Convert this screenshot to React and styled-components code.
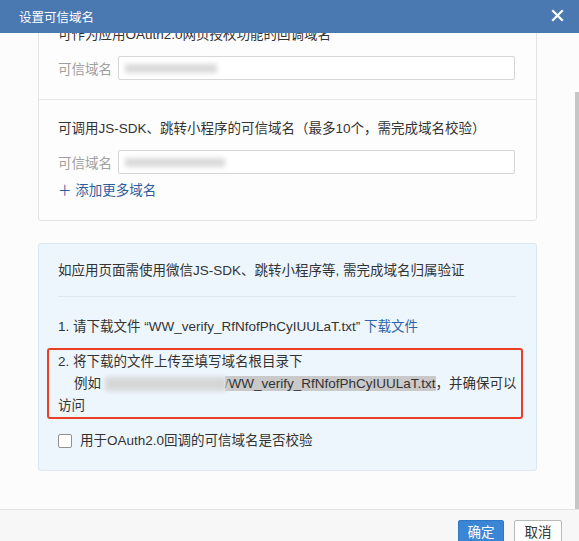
import React, { useEffect, useRef } from 'react';
import styled, { createGlobalStyle } from 'styled-components';

const GlobalStyle = createGlobalStyle`
  *, *::before, *::after {
    box-sizing: border-box;
  }
  html, body {
    margin: 0;
    padding: 0;
    background: #ffffff;
  }
  body {
    font-family: "Liberation Sans", "Noto Sans CJK SC", sans-serif;
    color: #333333;
  }
`;

const Dialog = styled.div`
  width: 579px;
  height: 541px;
  display: flex;
  flex-direction: column;
  overflow: hidden;
  background: #fcfcfc;
`;

const Header = styled.div`
  flex: none;
  height: 33px;
  display: flex;
  align-items: center;
  justify-content: space-between;
  padding: 0 14px 0 19px;
  background: #4a79b2;
  color: #ffffff;
  font-size: 12.5px;
`;

const CloseButton = styled.button`
  display: flex;
  align-items: center;
  justify-content: center;
  width: 16px;
  height: 16px;
  padding: 0;
  margin-top: -2px;
  border: none;
  background: none;
  cursor: pointer;
`;

const BodyWrap = styled.div`
  flex: 1;
  position: relative;
  min-height: 0;
`;

const Body = styled.div`
  height: 100%;
  overflow: hidden;
  padding: 40px 42px 38px 38px;
`;

const ScrollThumb = styled.div`
  position: absolute;
  right: 0;
  top: 59px;
  bottom: 0;
  width: 4px;
  background: #c6c6c6;
`;

const Card = styled.div`
  border: 1px solid #e3e3e3;
  border-radius: 3px;
  background: #fdfdfd;
`;

const Section = styled.div`
  padding: 18px 21px 18px 19px;
  border-top: ${(p) => (p.$first ? 'none' : '1px solid #e6e6e6')};
  padding-bottom: ${(p) => (p.$first ? '19px' : '18px')};
`;

const Text = styled.div`
  font-size: 13.5px;
  line-height: 22px;
  color: #333333;
  white-space: nowrap;
`;

const FieldRow = styled.div`
  display: flex;
  align-items: center;
  margin-top: 10px;
`;

const Label = styled.span`
  width: 60px;
  flex: none;
  font-size: 13.5px;
  color: #a0a0a0;
`;

const Input = styled.div`
  flex: 1;
  height: 24px;
  border: 1px solid #d6d6d6;
  border-radius: 2px;
  background: #ffffff;
  display: flex;
  align-items: center;
  padding-left: 6px;
`;

const Blur = styled.span`
  display: inline-block;
  width: ${(p) => p.$w}px;
  height: ${(p) => p.$h || 12}px;
  background: ${(p) => p.$c || '#d2d2d2'};
  filter: blur(2.5px);
  vertical-align: middle;
`;

const AddLink = styled.a`
  display: block;
  margin-top: 6px;
  font-size: 13.5px;
  line-height: 22px;
  color: #2c5e9e;
  text-decoration: none;
`;

const InfoBox = styled.div`
  margin-top: 22px;
  border: 1px solid #dbe7f2;
  border-radius: 3px;
  background: #eef6fd;
  padding: 16px 20px 18px 19px;
`;

const Divider = styled.div`
  height: 1px;
  background: #dde6ee;
  margin: 14px 0 19px;
`;

const Link = styled.a`
  color: #2c65a8;
  text-decoration: none;
`;

const Highlight = styled.div`
  margin: 10px -7px 0 -11px;
  border: 2px solid #ea3f25;
  border-radius: 3px;
  padding: 1px 0 0 9px;
`;

const StepLine = styled.div`
  font-size: 13.5px;
  line-height: 22px;
  color: #333333;
  white-space: nowrap;
  padding-left: ${(p) => (p.$indent ? '16px' : '0')};
`;

const Selected = styled.span`
  background: #c9c9c9;
  margin-left: -2px;
`;

const CheckRow = styled.label`
  display: flex;
  align-items: center;
  gap: 8px;
  margin-top: 11px;
  font-size: 13.5px;
  line-height: 22px;
  color: #333333;
`;

const CheckBox = styled.span`
  width: 14px;
  height: 14px;
  border: 1px solid #8f8f8f;
  border-radius: 2px;
  background: #ffffff;
  flex: none;
`;

const Footer = styled.div`
  flex: none;
  height: 32px;
  border-top: 1px solid #e3e3e3;
  background: #f7f7f7;
  display: flex;
  justify-content: flex-end;
  align-items: flex-start;
  gap: 10px;
  padding: 10px 17px 0 0;
`;

const Button = styled.button`
  width: ${(p) => p.$w}px;
  height: 26px;
  flex: none;
  padding: 0;
  border-radius: 2px;
  font-family: "Liberation Sans", "Noto Sans CJK SC", sans-serif;
  font-size: 13.5px;
  line-height: 24px;
  border: 1px solid ${(p) => (p.$primary ? '#2e78c8' : '#b9b9b9')};
  background: ${(p) => (p.$primary ? '#3b86d4' : '#ffffff')};
  color: ${(p) => (p.$primary ? '#ffffff' : '#333333')};
`;

function CloseIcon() {
  return (
    <svg width="13" height="13" viewBox="0 0 13 13">
      <path d="M2 2 L11 11 M11 2 L2 11" stroke="#ffffff" strokeWidth="2.2" strokeLinecap="square" />
    </svg>
  );
}

export default function App() {
  const bodyRef = useRef(null);

  useEffect(() => {
    if (bodyRef.current) bodyRef.current.scrollTop = 9999;
  }, []);

  return (
    <Dialog>
      <GlobalStyle />
      <Header>
        <span>设置可信域名</span>
        <CloseButton aria-label="关闭">
          <CloseIcon />
        </CloseButton>
      </Header>
      <BodyWrap>
        <Body ref={bodyRef}>
          <Card>
            <Section $first>
              <Text>可作为应用OAuth2.0网页授权功能的回调域名</Text>
              <FieldRow>
                <Label>可信域名</Label>
                <Input>
                  <Blur $w={92} $h={9} $c="#dadada" />
                </Input>
              </FieldRow>
            </Section>
            <Section>
              <Text>可调用JS-SDK、跳转小程序的可信域名（最多10个，需完成域名校验）</Text>
              <FieldRow>
                <Label>可信域名</Label>
                <Input>
                  <Blur $w={100} $h={9} $c="#dadada" />
                </Input>
              </FieldRow>
              <AddLink href="#">＋ 添加更多域名</AddLink>
            </Section>
          </Card>
          <InfoBox>
            <Text>如应用页面需使用微信JS-SDK、跳转小程序等, 需完成域名归属验证</Text>
            <Divider />
            <Text>
              1. 请下载文件 “WW_verify_RfNfofPhCyIUULaT.txt” <Link href="#">下载文件</Link>
            </Text>
            <Highlight>
              <StepLine>2. 将下载的文件上传至填写域名根目录下</StepLine>
              <StepLine $indent>
                例如 <Blur $w={122} $h={14} $c="#d6d6d6" />
                <Selected>/WW_verify_RfNfofPhCyIUULaT.txt</Selected>，并确保可以
              </StepLine>
              <StepLine>访问</StepLine>
            </Highlight>
            <CheckRow>
              <CheckBox />
              用于OAuth2.0回调的可信域名是否校验
            </CheckRow>
          </InfoBox>
        </Body>
        <ScrollThumb />
      </BodyWrap>
      <Footer>
        <Button $primary $w={46}>确定</Button>
        <Button $w={48}>取消</Button>
      </Footer>
    </Dialog>
  );
}
